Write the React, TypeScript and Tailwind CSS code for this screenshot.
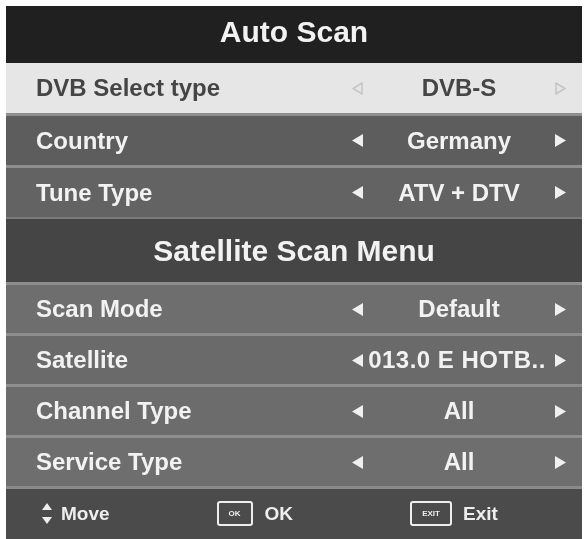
import React from "react";

const Left = ({ c }: { c: string }) => (
  <svg width="11" height="13" viewBox="0 0 11 13" className="shrink-0">
    <polygon points="11,0 11,13 0,6.5" fill={c} />
  </svg>
);
const Right = ({ c }: { c: string }) => (
  <svg width="11" height="13" viewBox="0 0 11 13" className="shrink-0">
    <polygon points="0,0 0,13 11,6.5" fill={c} />
  </svg>
);

type RowProps = {
  label: string;
  value: string;
  bg: string;
  h: string;
  sep?: boolean;
  wide?: boolean;
};

function Row({ label, value, bg, h, sep = true, wide = false }: RowProps) {
  return (
    <div className={`flex items-center justify-between pl-[30px] pr-[16px] ${bg} ${h} ${sep ? "border-t-[3px] border-[#8e8e8e]" : ""}`}>
      <span className="text-[24px] font-bold text-[#f2f2f2] leading-none">{label}</span>
      <div className="flex w-[214px] items-center">
        <Left c="#f0f0f0" />
        <span className={`flex-1 text-center text-[24px] font-bold text-[#f2f2f2] leading-none whitespace-nowrap ${wide ? "tracking-[0.5px] -ml-[4px]" : ""}`}>
          {value}
        </span>
        <Right c="#f0f0f0" />
      </div>
    </div>
  );
}

function KeyBox({ label, w }: { label: string; w: string }) {
  return (
    <div className={`flex h-[25px] ${w} items-center justify-center rounded-[3px] border-2 border-[#eeeeee]`}>
      <span className="text-[8px] font-bold text-[#eeeeee] leading-none">{label}</span>
    </div>
  );
}

export default function App() {
  return (
    <div className="min-h-[539px] w-[587px] bg-white pt-[6px] pl-[6px] pr-[5px] font-['Liberation_Sans',Arial,sans-serif]">
      <div className="flex flex-col overflow-hidden blur-[0.4px]">
        <div className="flex h-[57px] items-center justify-center bg-[#202020] pb-[6px]">
          <span className="text-[30px] font-bold text-[#f2f2f2] leading-none">Auto Scan</span>
        </div>
        <div className="flex h-[50px] items-center justify-between bg-[#e6e6e6] pl-[30px] pr-[16px]">
          <span className="text-[24px] font-bold text-[#454545] leading-none">DVB Select type</span>
          <div className="flex w-[214px] items-center">
            <svg width="11" height="13" viewBox="0 0 11 13" className="shrink-0">
              <polygon points="10,1 10,12 1,6.5" fill="none" stroke="#c4c4c4" strokeWidth="1.5" />
            </svg>
            <span className="flex-1 text-center text-[24px] font-bold text-[#454545] leading-none">DVB-S</span>
            <svg width="11" height="13" viewBox="0 0 11 13" className="shrink-0">
              <polygon points="1,1 1,12 10,6.5" fill="none" stroke="#c4c4c4" strokeWidth="1.5" />
            </svg>
          </div>
        </div>
        <Row label="Country" value="Germany" bg="bg-[#5d5d5d]" h="h-[52px]" />
        <Row label="Tune Type" value="ATV + DTV" bg="bg-[#636363]" h="h-[52px]" />
        <div className="flex h-[65px] items-center justify-center bg-[#454545] border-t-[2px] border-[#7a7a7a]">
          <span className="text-[30px] font-bold text-[#f2f2f2] leading-none">Satellite Scan Menu</span>
        </div>
        <Row label="Scan Mode" value="Default" bg="bg-[#6e6e6e]" h="h-[51px]" />
        <Row label="Satellite" value="013.0 E HOTB.." bg="bg-[#6a6a6a]" h="h-[51px]" wide />
        <Row label="Channel Type" value="All" bg="bg-[#6c6c6c]" h="h-[51px]" />
        <Row label="Service Type" value="All" bg="bg-[#6e6e6e]" h="h-[51px]" />
        <div className="flex h-[54px] items-center bg-[#4b4b4b] border-t-[3px] border-[#8a8a8a] pl-[36px] pb-[2px]">
          <div className="flex items-center gap-[9px]">
            <div className="flex flex-col items-center gap-[7px]">
              <svg width="10" height="7" viewBox="0 0 10 7">
                <polygon points="5,0 10,7 0,7" fill="#eeeeee" />
              </svg>
              <svg width="10" height="7" viewBox="0 0 10 7">
                <polygon points="0,0 10,0 5,7" fill="#eeeeee" />
              </svg>
            </div>
            <span className="text-[19px] font-bold text-[#eeeeee] leading-none">Move</span>
          </div>
          <div className="ml-[107px] flex items-center gap-[12px]">
            <KeyBox label="OK" w="w-[36px]" />
            <span className="text-[19px] font-bold text-[#eeeeee] leading-none">OK</span>
          </div>
          <div className="ml-[117px] flex items-center gap-[11px]">
            <KeyBox label="EXIT" w="w-[42px]" />
            <span className="text-[19px] font-bold text-[#eeeeee] leading-none">Exit</span>
          </div>
        </div>
      </div>
    </div>
  );
}
